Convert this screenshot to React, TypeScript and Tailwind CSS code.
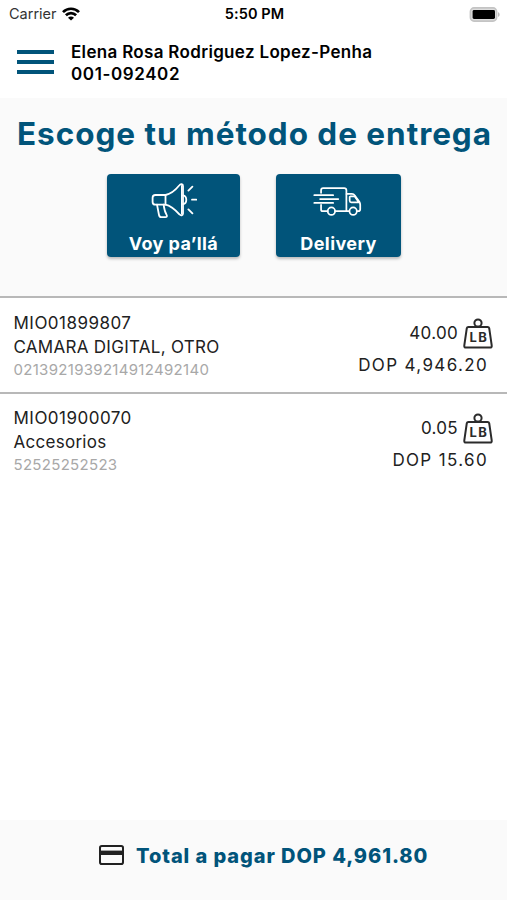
const packages = [
  { id: 'MIO01899807', description: 'CAMARA DIGITAL, OTRO', tracking: '0213921939214912492140', weight: '40.00', price: 'DOP 4,946.20' },
  { id: 'MIO01900070', description: 'Accesorios', tracking: '52525252523', weight: '0.05', price: 'DOP 15.60' },
];

function WifiIcon() {
  return (
    <svg width="18" height="14" viewBox="0 0 18 14" fill="none" stroke="#000" strokeWidth="2.7">
      <path d="M1 5.1C5.5 0.6 12.5 0.6 17 5.1" />
      <path d="M3.9 8.3C6.8 5.4 11.2 5.4 14.1 8.3" />
      <path d="M9 13.6L6 10.8C7.7 9.2 10.3 9.2 12 10.8Z" fill="#000" stroke="none" />
    </svg>
  );
}

function BatteryIcon() {
  return (
    <svg width="31" height="15" viewBox="0 0 31 15" fill="none">
      <rect x="1.4" y="0.9" width="26.2" height="13.2" rx="3.6" fill="#ddd" stroke="#c4c4c4" strokeWidth="1.6" />
      <rect x="3.6" y="3" width="22.4" height="9" rx="1.4" fill="#000" />
      <path d="M29 5.2C31.2 5.8 31.2 9.2 29 9.8Z" fill="#bdbdbd" />
    </svg>
  );
}

function MegaphoneIcon() {
  return (
    <svg width="46" height="36" viewBox="0 0 46 36" fill="none" stroke="#fff" strokeWidth="1.8" strokeLinecap="round" strokeLinejoin="round">
      <path d="M14.5 12H4.4C2.6 12 1.6 13 1.6 14.7V18.9C1.6 20.6 2.6 21.6 4.4 21.6H14.5Z" />
      <path d="M14.5 12C20 11 25 6.5 28.4 2.3C29.6 0.5 32 1 32 3V30.4C32 32.6 29.8 33 28.4 31.3C24.5 27 20 22.6 14.5 21.6" />
      <path d="M30.6 2.5V31" strokeWidth="1.2" />
      <path d="M32 12.3C36.4 13 36.4 20.4 32 21.1" />
      <path d="M6 21.6L8 32C8.3 33.5 9 34.2 10.4 34.2H14.3C15.9 34.2 16.3 33.2 15.6 31.9C13.7 28.7 13.1 25.4 12.6 21.6" />
      <path d="M37.4 7.6L41.4 3.6M41 16.7H45.4M37.4 26.4L41.4 30.4" />
    </svg>
  );
}

function TruckIcon() {
  return (
    <svg width="49" height="29" viewBox="0 0 50 30" fill="none" stroke="#fff" strokeWidth="1.8" strokeLinecap="round" strokeLinejoin="round">
      <path d="M8 6V3.4C8 2 8.8 1.2 10.2 1.2H31.8C33.4 1.2 34.2 2 34.2 3.4V24.8" />
      <path d="M1 8.5H20.5M7 12.5H25.8M1 16.5H20.5" />
      <path d="M8 18.4V23.2C8 24.4 8.7 25 9.8 25H14.8M22.6 25H36.8M45.6 25H46.5C47.9 25 48.5 24.3 48.5 23V18.3C48.5 17 48.2 16.3 47.6 15.3L42.9 8.8C42.2 7.8 41.4 7.2 40 7.2H34.4" />
      <path d="M37.6 10.3V14.2C37.6 15.2 38.2 15.8 39.2 15.8H47L42.7 9.6H38.4Z" />
      <circle cx="18.7" cy="25" r="3.8" />
      <circle cx="41.2" cy="25" r="3.8" />
    </svg>
  );
}

function WeightIcon() {
  return (
    <svg width="30" height="31" viewBox="0 0 30 31" fill="none" stroke="#2b2b2b" strokeWidth="2" strokeLinejoin="round">
      <circle cx="15" cy="5" r="3.6" />
      <path d="M5.4 8.9H24.6C25.5 8.9 26 9.3 26.2 10.2L28.7 27.4C28.9 28.9 28.4 29.6 27 29.6H3C1.6 29.6 1.1 28.9 1.3 27.4L3.8 10.2C4 9.3 4.5 8.9 5.4 8.9Z" />
      <text x="6.6" y="23.8" fill="#2b2b2b" stroke="none" fontFamily="Inter, sans-serif" fontSize="13" fontWeight="700" letterSpacing="1.4">LB</text>
    </svg>
  );
}

function CardIcon() {
  return (
    <svg width="25" height="20" viewBox="0 0 25 20" fill="none">
      <rect x="1" y="1" width="23" height="18" rx="1.8" stroke="#212121" strokeWidth="2" />
      <rect x="1" y="5.6" width="23" height="4.4" fill="#212121" />
    </svg>
  );
}

export default function App() {
  return (
    <div className="flex h-[900px] w-[507px] flex-col overflow-hidden bg-white font-['Inter',sans-serif] whitespace-nowrap text-[#212121]">
      <div className="grid h-7 grid-cols-3 items-center pr-[7px] pl-[9px] text-black">
        <div className="flex items-center gap-[5px]">
          <span className="text-[14.5px] leading-7 text-[#333]">Carrier</span>
          <WifiIcon />
        </div>
        <div className="text-center text-[14.5px] leading-7 font-semibold tracking-[0.1px]">5:50 PM</div>
        <div className="flex justify-end">
          <BatteryIcon />
        </div>
      </div>

      <header className="flex h-[70px] items-center pb-[2px] pl-[17px]">
        <button className="flex flex-col gap-[6px]" aria-label="Menu">
          <span className="h-1 w-[37px] bg-[#01547a]"></span>
          <span className="h-1 w-[37px] bg-[#01547a]"></span>
          <span className="h-1 w-[37px] bg-[#01547a]"></span>
        </button>
        <div className="ml-[17px] pt-px text-[17px] leading-[22px] font-semibold text-black">
          <div className="tracking-[0.32px]">Elena Rosa Rodriguez Lopez-Penha</div>
          <div className="tracking-[0.6px]">001-092402</div>
        </div>
      </header>

      <section className="h-[198px] bg-[#fafafa] pt-4">
        <h1 className="pl-[17px] text-[31.5px] leading-10 font-bold tracking-[0.96px] text-[#01547a]">Escoge tu método de entrega</h1>
        <div className="mt-5 flex gap-9 pl-[107px] text-[18px] font-bold tracking-[0.4px] text-white">
          <button className="flex h-[82.5px] w-[133px] flex-col items-center justify-between rounded-[4px] bg-[#01547a] pt-[9px] shadow-[0_2px_3px_rgba(0,0,0,0.25)]">
            <MegaphoneIcon />
            <span className="leading-[26px]">Voy pa’llá</span>
          </button>
          <button className="flex h-[82.5px] w-[125px] flex-col items-center justify-between rounded-[4px] bg-[#01547a] pt-[13px] shadow-[0_2px_3px_rgba(0,0,0,0.25)]">
            <span className="pr-[3px]">
              <TruckIcon />
            </span>
            <span className="leading-[26px]">Delivery</span>
          </button>
        </div>
      </section>

      <main className="flex-1">
        {packages.map((item) => (
          <div key={item.id} className="flex h-[95.5px] justify-between border-t-2 border-[#b8b8b8] pl-[13.5px]">
            <div className="pt-[12.5px]">
              <div className="text-[17px] leading-6 tracking-[0.48px]">{item.id}</div>
              <div className="text-[17px] leading-6 tracking-[0.28px]">{item.description}</div>
              <div className="text-[15px] leading-[22px] tracking-[0.3px] text-[#a8a8a8]">{item.tracking}</div>
            </div>
            <div className="flex flex-col items-end pt-[19.5px]">
              <div className="flex items-center gap-[5px] pr-[14px]">
                <span className="text-[17px] leading-[31px] tracking-[0.3px]">{item.weight}</span>
                <WeightIcon />
              </div>
              <div className="pr-[19px] text-[17px] leading-8 tracking-[1.35px]">{item.price}</div>
            </div>
          </div>
        ))}
      </main>

      <footer className="flex h-20 items-start gap-3 bg-[#fafafa] pt-[25px] pl-[99px]">
        <CardIcon />
        <span className="text-[20px] leading-[22px] font-extrabold tracking-[0.93px] text-[#01547a]">Total a pagar DOP 4,961.80</span>
      </footer>
    </div>
  );
}
